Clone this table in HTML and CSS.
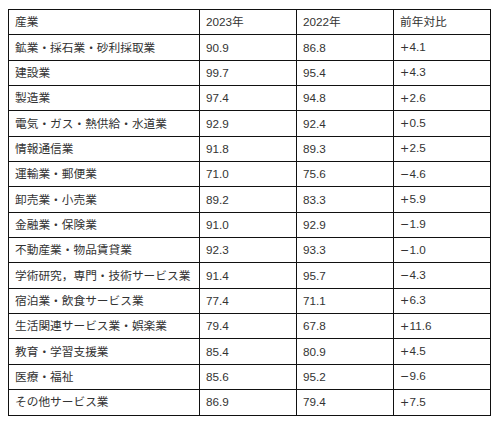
FILE: index.html
```html
<!DOCTYPE html>
<html lang="ja">
<head>
<meta charset="utf-8">
<link rel="stylesheet" href="styles.css">
</head>
<body>
<table class="data">
<colgroup><col class="c1"><col class="c2"><col class="c3"><col class="c4"></colgroup>
<tr><td>産業</td><td>2023年</td><td>2022年</td><td>前年対比</td></tr>
<tr><td>鉱業・採石業・砂利採取業</td><td>90.9</td><td>86.8</td><td><span class="sg">+</span>4.1</td></tr>
<tr><td>建設業</td><td>99.7</td><td>95.4</td><td><span class="sg">+</span>4.3</td></tr>
<tr><td>製造業</td><td>97.4</td><td>94.8</td><td><span class="sg">+</span>2.6</td></tr>
<tr><td>電気・ガス・熱供給・水道業</td><td>92.9</td><td>92.4</td><td><span class="sg">+</span>0.5</td></tr>
<tr><td>情報通信業</td><td>91.8</td><td>89.3</td><td><span class="sg">+</span>2.5</td></tr>
<tr><td>運輸業・郵便業</td><td>71.0</td><td>75.6</td><td><span class="sg">−</span>4.6</td></tr>
<tr><td>卸売業・小売業</td><td>89.2</td><td>83.3</td><td><span class="sg">+</span>5.9</td></tr>
<tr><td>金融業・保険業</td><td>91.0</td><td>92.9</td><td><span class="sg">−</span>1.9</td></tr>
<tr><td>不動産業・物品賃貸業</td><td>92.3</td><td>93.3</td><td><span class="sg">−</span>1.0</td></tr>
<tr><td>学術研究，専門・技術サービス業</td><td>91.4</td><td>95.7</td><td><span class="sg">−</span>4.3</td></tr>
<tr><td>宿泊業・飲食サービス業</td><td>77.4</td><td>71.1</td><td><span class="sg">+</span>6.3</td></tr>
<tr><td>生活関連サービス業・娯楽業</td><td>79.4</td><td>67.8</td><td><span class="sg">+</span>11.6</td></tr>
<tr><td>教育・学習支援業</td><td>85.4</td><td>80.9</td><td><span class="sg">+</span>4.5</td></tr>
<tr><td>医療・福祉</td><td>85.6</td><td>95.2</td><td><span class="sg">−</span>9.6</td></tr>
<tr><td>その他サービス業</td><td>86.9</td><td>79.4</td><td><span class="sg">+</span>7.5</td></tr>
</table>
</body>
</html>
```

FILE: styles.css
```css
html, body {
  background: #ffffff;
}
body {
  margin: 9px 8px 8px 8px;
  font-family: "Liberation Sans", "Noto Sans CJK JP", sans-serif;
  font-size: 11.7px;
  color: #333333;
}
.data {
  border-collapse: collapse;
  table-layout: fixed;
  width: 482px;
}
.c1 { width: 191px; }
.c2 { width: 97px; }
.c3 { width: 97px; }
.c4 { width: 97px; }
.data td {
  border: 1px solid #111111;
  height: 25.35px;
  padding: 0 6px;
  box-sizing: border-box;
  vertical-align: middle;
  white-space: nowrap;
  line-height: 14px;
}
.sg {
  display: inline-block;
  width: 9.5px;
  font-family: "DejaVu Sans", sans-serif;
  font-size: 11px;
}
```
